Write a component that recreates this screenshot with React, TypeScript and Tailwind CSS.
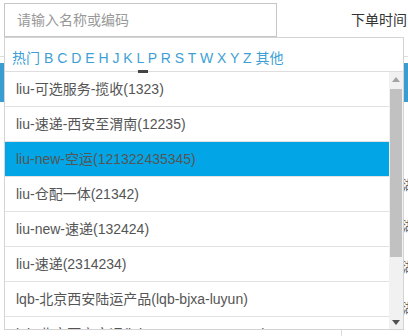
import React from 'react';

const letters = ['B', 'C', 'D', 'E', 'H', 'J', 'K', 'L', 'P', 'R', 'S', 'T', 'W', 'X', 'Y', 'Z'];

const items = [
  'liu-可选服务-揽收(1323)',
  'liu-速递-西安至渭南(12235)',
  'liu-new-空运(121322435345)',
  'liu-仓配一体(21342)',
  'liu-new-速递(132424)',
  'liu-速递(2314234)',
  'lqb-北京西安陆运产品(lqb-bjxa-luyun)',
  'lqb-北京西安空运(lqb-BJXA-KONGYUN)',
];

const font = { fontFamily: '"Liberation Sans", "Noto Sans CJK SC", sans-serif' };

export default function App() {
  return (
    <div className="relative w-[408px] h-[336px] overflow-hidden bg-white text-[14px]" style={font}>
      {/* page underneath */}
      <div className="flex items-center pt-[3px] pl-[4px]">
        <div className="w-[273px] h-[34px] border border-[#c6c6c6] flex items-center pl-[12px] text-[#999]">
          请输入名称或编码
        </div>
        <div className="ml-[74px] text-[#333] whitespace-nowrap">下单时间</div>
      </div>
      <div className="h-[20px] border-b border-[#ddd]" />
      <div className="mt-[6px] h-[39px] bg-[#3a9dd2]" />
      <div className="h-[63px]" />
      {[0, 1, 2, 3].map((i) => (
        <div key={i} className="h-[41px] flex items-center justify-end">
          <span className="-mr-[8px] text-[#666]">湖</span>
        </div>
      ))}
      <div className="flex">
        <div className="w-[342px] h-[8px] border-r border-[#ddd]" />
      </div>

      {/* dropdown */}
      <div className="absolute top-[37px] left-[4px] w-[400px] h-[293px] bg-white border border-[#d4d4d4] flex flex-col">
        <div className="relative h-[34px] shrink-0 border-b border-[#dedede] pl-[7px] pt-[10px] leading-5 text-[#3e9fd6] whitespace-nowrap">
          热门
          {letters.map((l) => (
            <span key={l}> {l}</span>
          ))}
          <span> 其他</span>
          <div className="absolute left-[133px] bottom-[-2px] w-[10px] h-[3px] bg-[#444]" />
        </div>
        <div className="flex flex-1 min-h-0">
          <div className="flex-1 overflow-hidden">
            {items.map((t, i) => (
              <div
                key={t}
                className={
                  'h-[35px] flex items-center pl-[11px] border-b border-[#e2e2e2] text-[#555] whitespace-nowrap ' +
                  (i === 2 ? 'bg-[#02a6e6]' : '')
                }
              >
                {t}
              </div>
            ))}
          </div>
          <div className="w-[14px] bg-[#f1f1f1] flex flex-col items-center">
            <div className="h-[14px] flex items-center justify-center">
              <svg width="8" height="5" viewBox="0 0 8 5">
                <path d="M0 5 L4 0 L8 5 Z" fill="#a3a3a3" />
              </svg>
            </div>
            <div className="mt-[3px] w-[12px] h-[168px] bg-[#c1c1c1]" />
            <div className="flex-1" />
            <div className="h-[14px] flex items-center justify-center">
              <svg width="8" height="5" viewBox="0 0 8 5">
                <path d="M0 0 L8 0 L4 5 Z" fill="#505050" />
              </svg>
            </div>
          </div>
        </div>
      </div>
    </div>
  );
}
